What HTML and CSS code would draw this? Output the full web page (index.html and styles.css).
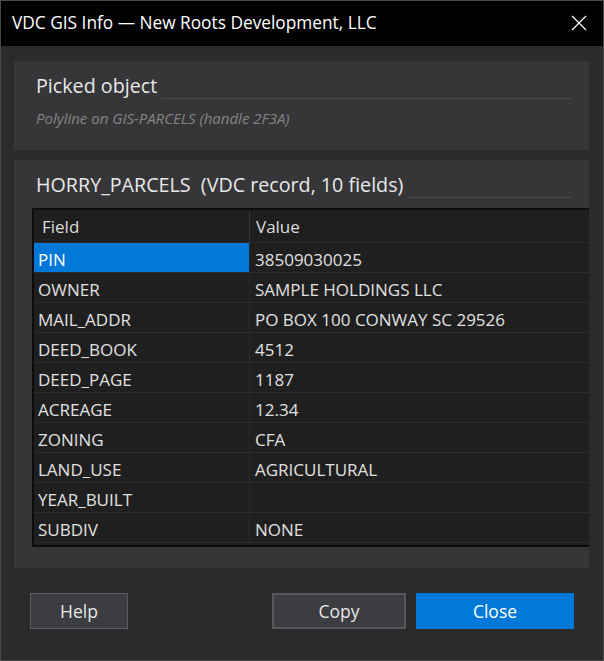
FILE: index.html
```html
<!DOCTYPE html>
<html>
<head>
<meta charset="utf-8">
<link rel="stylesheet" href="styles.css">
</head>
<body>
<div class="window">
  <div class="titlebar">
    <span class="title">VDC GIS Info — New Roots Development, LLC</span>
    <svg class="close-x" width="16" height="16" viewBox="0 0 16 16"><path d="M1 1 L15 15 M15 1 L1 15" stroke="#fff" stroke-width="1.2" fill="none"/></svg>
  </div>
  <div class="content">
    <div class="group group1">
      <div class="ghead"><span class="gtitle">Picked object</span><span class="gline"></span></div>
      <div class="sub">Polyline on GIS-PARCELS (handle 2F3A)</div>
    </div>
    <div class="group group2">
      <div class="ghead"><span class="gtitle">HORRY_PARCELS&nbsp; (VDC record, 10 fields)</span><span class="gline"></span></div>
      <div class="table">
        <div class="hcell">Field</div><div class="hcell hval">Value</div>
        <div class="cell sel">PIN</div><div class="cell val">38509030025</div>
        <div class="cell">OWNER</div><div class="cell val">SAMPLE HOLDINGS LLC</div>
        <div class="cell">MAIL_ADDR</div><div class="cell val">PO BOX 100 CONWAY SC 29526</div>
        <div class="cell">DEED_BOOK</div><div class="cell val">4512</div>
        <div class="cell">DEED_PAGE</div><div class="cell val">1187</div>
        <div class="cell">ACREAGE</div><div class="cell val">12.34</div>
        <div class="cell">ZONING</div><div class="cell val">CFA</div>
        <div class="cell">LAND_USE</div><div class="cell val">AGRICULTURAL</div>
        <div class="cell">YEAR_BUILT</div><div class="cell val"></div>
        <div class="cell">SUBDIV</div><div class="cell val">NONE</div>
      </div>
    </div>
    <div class="buttons">
      <button class="btn help">Help</button>
      <span class="spacer"></span>
      <button class="btn copy">Copy</button>
      <button class="btn primary">Close</button>
    </div>
  </div>
</div>
</body>
</html>
```

FILE: styles.css
```css
html, body { margin: 0; padding: 0; background: #2b2b2d; }
body { font-family: "Open Sans", "Noto Sans", sans-serif; color: #e6e6e6; }
.window {
  width: 604px; height: 661px; box-sizing: border-box;
  border: 1px solid #4a4a4c; background: #2b2b2d;
  display: flex; flex-direction: column; overflow: hidden;
}
.titlebar {
  height: 45px; box-sizing: border-box; background: #000; display: flex; align-items: center;
  padding: 0 12px 2px 11px; flex-shrink: 0;
}
.title { font-size: 17.3px; color: #fff; flex: 1; line-height: 24px; }
.close-x { margin-right: 4px; margin-top: 0; }
.content { padding: 15px 14px 0 13px; display: flex; flex-direction: column; flex: 1; }
.group { background: #363638; }
.group1 { height: 89px; box-sizing: border-box; padding: 10px 18px 0 22px; }
.group2 { height: 408px; box-sizing: border-box; margin-top: 10px; padding: 10px 0 0 18px; overflow: hidden; }
.group2 .ghead { padding-left: 4px; padding-right: 18px; }
.ghead { display: flex; align-items: flex-end; height: 30px; }
.gtitle { font-size: 19.7px; color: #e8e8e8; white-space: nowrap; line-height: 30px; }
.gline { flex: 1; height: 1px; background: #4c4c4e; margin: 0 0 2px 4px; }
.sub { font-size: 15px; line-height: 20px; font-style: italic; color: #848484; margin-top: 7px; }
.table {
  margin-top: 8px; border-top: 2px solid #0c0c0c; border-left: 2px solid #0c0c0c; border-bottom: 2px solid #0c0c0c;
  background: #1f1f1f; height: 339px; box-sizing: border-box;
  display: grid; grid-template-columns: 215px 1fr; grid-auto-rows: 30px; grid-template-rows: 33px;
  align-content: start;
}
.hcell { font-size: 17px; color: #dcdcdc; padding-left: 8px; display: flex; align-items: center; border-bottom: 1px solid #2c2c2c; background: #1e1e1e; }
.hval { border-left: 1px solid #333; padding-left: 6px; }
.cell { font-size: 17px; color: #e0e0e0; padding: 3px 0 0 4px; display: flex; align-items: center; border-bottom: 1px solid #2c2c2c; box-sizing: border-box; }
.cell.val { padding-left: 5px; border-left: 1px solid #2a2a2a; }
.cell.sel { background: #0078d7; color: #fff; }
.buttons { display: flex; margin-top: 25px; padding-left: 16px; padding-right: 15px; }
.spacer { flex: 1; }
.btn {
  font-family: "Open Sans", "Noto Sans", sans-serif; font-size: 17.5px; color: #e6e6e6;
  height: 36px; box-sizing: border-box; background: #3c3d41; border: 1px solid #5c5c5e; padding: 0;
}
.help { width: 98px; }
.copy { width: 134px; border-width: 2px; border-color: #58585a; }
.primary { width: 158px; margin-left: 10px; background: #0078d7; border-color: #0078d7; color: #fff; }
```
